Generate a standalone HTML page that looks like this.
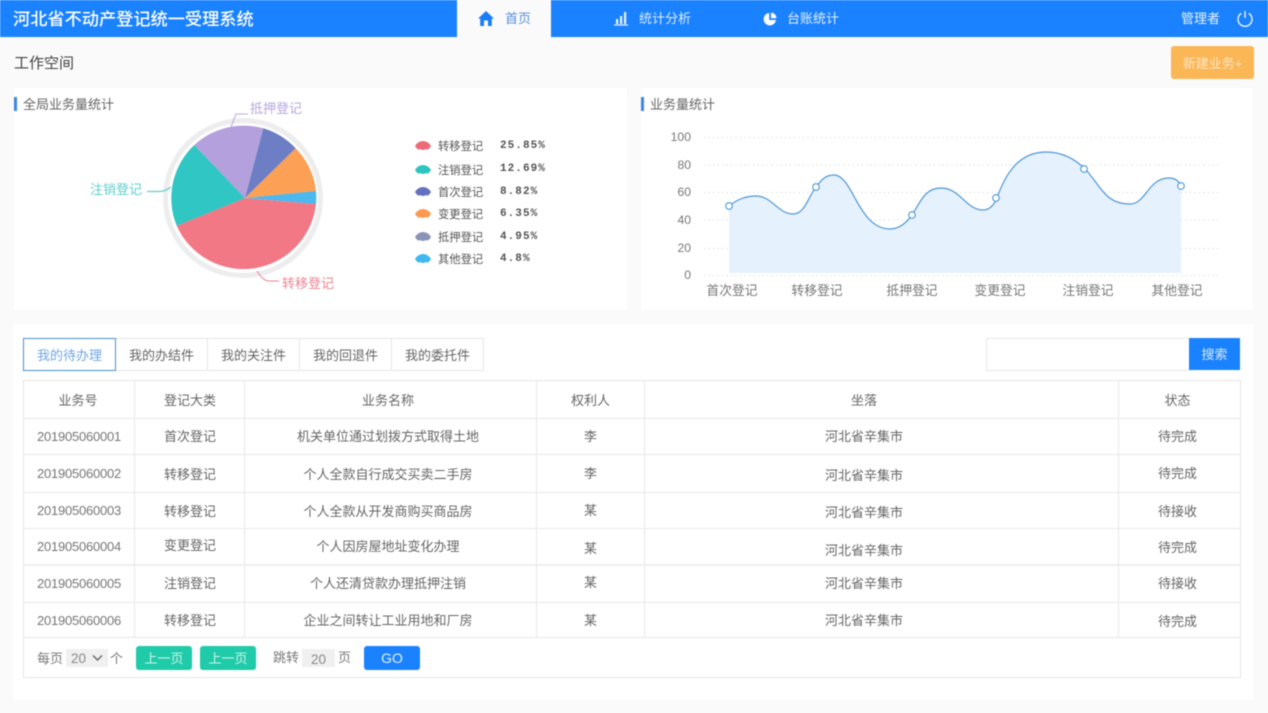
<!DOCTYPE html>
<html lang="zh"><head><meta charset="utf-8"><title>河北省不动产登记统一受理系统</title>
<style>
*{box-sizing:border-box}
html,body{margin:0;padding:0;width:1268px;height:713px;overflow:hidden;background:#fafafa}
body{position:relative;font-family:"Liberation Sans","Noto Sans CJK SC",sans-serif;font-size:13px;color:#666}
#w{position:absolute;left:0;top:0;width:1268px;height:713px;filter:blur(.4px)}
#w div,#w svg{position:absolute}
.t{line-height:20px;height:20px;white-space:nowrap;margin-top:1px}
.c{text-align:center}
.l{background:#e8e8e8}
.c1{left:23px;width:110px}.c2{left:135px;width:110px}.c3{left:245px;width:286px}.c4{left:537px;width:107px}.c5{left:645px;width:438px}.c6{left:1119px;width:117px}
.n{letter-spacing:-.23px;color:#777;left:24px}
.tab{top:338px;height:33px;line-height:34px;text-align:center;border:1px solid #e6e6e6;border-left:0;color:#666}
.lg{left:438px;font-size:11.3px;color:#555}
.pc{left:500px;font-family:"Liberation Mono",monospace;font-size:11px;font-weight:bold;letter-spacing:1.05px;color:#555}
.ax{font-size:12.8px;color:#777;text-align:center;width:70px}
.yx{left:655px;width:36px;text-align:right;font-size:12.2px;color:#777;margin-top:0}
.btn{top:646px;height:24px;line-height:25px;border-radius:3px;color:#fff;text-align:center;width:56px}
</style></head><body><div id="w">

<div style="left:0;top:0;width:1268px;height:37px;background:#1a82ff"></div>
<div style="left:0;top:37px;width:1268px;height:1px;background:#e3f6ff"></div>
<div class="t" style="left:13px;top:8px;font-size:17.2px;font-weight:500;color:#fff">河北省不动产登记统一受理系统</div>
<div style="left:457px;top:0;width:94px;height:38px;background:#fafafa"></div>
<svg style="left:477px;top:10px" width="18" height="17" viewBox="0 0 18 17"><path d="M9 1 L17 8.600 L14.800 8.600 L14.800 16 L11 16 L11 10.500 L7 10.500 L7 16 L3.200 16 L3.200 8.600 L1 8.600 Z" fill="#1a7df5"/></svg>
<div class="t" style="left:505px;top:8px;color:#5a8fd8">首页</div>
<svg style="left:613px;top:11px" width="16" height="15" viewBox="0 0 16 15"><path d="M1 14H15" stroke="#e8f2ff" stroke-width="1.2"/><rect x="3" y="8" width="2.200" height="5" fill="#e8f2ff"/><rect x="7" y="5" width="2.200" height="8" fill="#e8f2ff"/><rect x="11" y="1" width="2.200" height="12" fill="#e8f2ff"/></svg>
<div class="t" style="left:639px;top:8px;color:#dcebff">统计分析</div>
<svg style="left:763px;top:12px" width="14" height="14" viewBox="0 0 14 14"><path d="M6.200 1 A6.200 6.200 0 1 0 13 8 L6.200 8 Z" fill="#fff"/><path d="M8 .6 A5.600 5.600 0 0 1 13.400 6.200 L8 6.200 Z" fill="#fff"/></svg>
<div class="t" style="left:787px;top:8px;color:#e4efff">台账统计</div>
<div class="t" style="left:1181px;top:8px;color:#e8f2ff">管理者</div>
<svg style="left:1236px;top:10px" width="18" height="18" viewBox="0 0 18 18"><path d="M5.200 3.400 A7 7 0 1 0 12.800 3.400" fill="none" stroke="#e8f2ff" stroke-width="1.4"/><path d="M9 1V8" stroke="#e8f2ff" stroke-width="1.4"/></svg>

<div class="t" style="left:14px;top:53px;font-size:15px;color:#444">工作空间</div>
<div class="t c" style="left:1171px;top:46px;width:83px;height:33px;line-height:35px;margin-top:0;background:#fbb655;border-radius:3px;color:#fde6c4">新建业务+</div>

<div style="left:14px;top:88px;width:613px;height:222px;background:#fff"></div>
<div style="left:641px;top:88px;width:612px;height:222px;background:#fff"></div>
<div style="left:14px;top:97px;width:3px;height:14px;background:#3b86e6"></div>
<div class="t" style="left:23px;top:95px;margin-top:0;color:#666">全局业务量统计</div>
<div style="left:641px;top:97px;width:3px;height:14px;background:#3b86e6"></div>
<div class="t" style="left:650px;top:95px;margin-top:0;color:#666">业务量统计</div>

<svg style="left:0;top:0" width="640" height="310" viewBox="0 0 640 310">
<circle cx="243" cy="198" r="77.500" fill="#fff" stroke="#ededed" stroke-width="5"/>
<path d="M245 198 L316 204 A73 73 0 0 1 176.700 225.700 Z" fill="#f27885"/>
<path d="M245 198 L176.700 225.700 A73 73 0 0 1 194.300 145 Z" fill="#2fc6c3"/>
<path d="M245 198 L194.300 145 A73 73 0 0 1 263.300 128.300 Z" fill="#b4a0dc"/>
<path d="M245 198 L263.300 128.300 A73 73 0 0 1 295.700 148.300 Z" fill="#6d7ec4"/>
<path d="M245 198 L295.700 148.300 A73 73 0 0 1 316 191 Z" fill="#fba055"/>
<path d="M245 198 L316 191 A73 73 0 0 1 316 204 Z" fill="#4cb8ee"/>
<path d="M231 127 L236 114 H248" fill="none" stroke="#b9a6dc" stroke-width="1"/>
<path d="M171 187 Q165 191.500 159 191.500 H147" fill="none" stroke="#5fcfcf" stroke-width="1.300"/>
<path d="M257 271 Q263 281 269 281 H279" fill="none" stroke="#ee8492" stroke-width="1"/>
<g>
<path d="M415 146 Q418 141 423 141 Q428 141 431 146 Q428 151 426 149 Q423 151 420 149 Q418 151 415 146Z" fill="#ee6a78"/>
<path d="M415 170 Q418 165 423 165 Q428 165 431 170 Q428 175 426 173 Q423 175 420 173 Q418 175 415 170Z" fill="#2cc4bf"/>
<path d="M415 192 Q418 187 423 187 Q428 187 431 192 Q428 197 426 195 Q423 197 420 195 Q418 197 415 192Z" fill="#6470c0"/>
<path d="M415 214 Q418 209 423 209 Q428 209 431 214 Q428 219 426 217 Q423 219 420 217 Q418 219 415 214Z" fill="#fb9a50"/>
<path d="M415 237 Q418 232 423 232 Q428 232 431 237 Q428 242 426 240 Q423 242 420 240 Q418 242 415 237Z" fill="#8a93b8"/>
<path d="M415 259 Q418 254 423 254 Q428 254 431 259 Q428 264 426 262 Q423 264 420 262 Q418 264 415 259Z" fill="#3fb8f0"/>
</g>
</svg>
<div class="t" style="left:250px;top:98px;color:#b9a6dc">抵押登记</div>
<div class="t" style="left:90px;top:179px;color:#5fcfcf">注销登记</div>
<div class="t" style="left:282px;top:273px;color:#ee8492">转移登记</div>

<div class="t lg" style="top:136px">转移登记</div><div class="t pc" style="top:135px">25.85%</div>
<div class="t lg" style="top:160px">注销登记</div><div class="t pc" style="top:158px">12.69%</div>
<div class="t lg" style="top:182px">首次登记</div><div class="t pc" style="top:181px">8.82%</div>
<div class="t lg" style="top:204px">变更登记</div><div class="t pc" style="top:203px">6.35%</div>
<div class="t lg" style="top:227px">抵押登记</div><div class="t pc" style="top:226px">4.95%</div>
<div class="t lg" style="top:249px">其他登记</div><div class="t pc" style="top:248px">4.8%</div>

<svg style="left:640px;top:120px" width="600" height="170" viewBox="640 120 600 170">
<g stroke="#cfcfcf" stroke-width="1" stroke-dasharray="1 3.500">
<path d="M704 137.500H1220M704 165H1220M704 192.500H1220M704 220H1220M704 248.500H1220M704 275.500H1220"/>
</g>
<path d="M729 206 C738 199 746 196 756 196 C772 196 778 214 793 214 C805 214 808 197 816 187 C822 179 826 175 834 175 C853 175 858 229 890 229 C900 229 907 222 912 215 C921 201 925 188 941 188 C960 188 966 210 983 210 C990 210 994 205 997 198 C1006 172 1020 152 1046 152 C1064 152 1076 160 1085 169 C1100 184 1104 204 1130 204 C1146 204 1148 178 1169 178 C1175 178 1179 181 1181 186 L1181 273 L729 273 Z" fill="#e6f1fe"/>
<path d="M729 206 C738 199 746 196 756 196 C772 196 778 214 793 214 C805 214 808 197 816 187 C822 179 826 175 834 175 C853 175 858 229 890 229 C900 229 907 222 912 215 C921 201 925 188 941 188 C960 188 966 210 983 210 C990 210 994 205 997 198 C1006 172 1020 152 1046 152 C1064 152 1076 160 1085 169 C1100 184 1104 204 1130 204 C1146 204 1148 178 1169 178 C1175 178 1179 181 1181 186" fill="none" stroke="#4d97d8" stroke-width="1.200"/>
<g fill="#fff" stroke="#4d97d8" stroke-width="1.100">
<circle cx="729" cy="206" r="3.300"/><circle cx="816" cy="187" r="3.300"/><circle cx="912" cy="215" r="3.300"/><circle cx="996" cy="198" r="3.300"/><circle cx="1084" cy="169" r="3.300"/><circle cx="1181" cy="186" r="3.300"/>
</g>
</svg>
<div class="t yx" style="top:127px">100</div>
<div class="t yx" style="top:155px">80</div>
<div class="t yx" style="top:182px">60</div>
<div class="t yx" style="top:210px">40</div>
<div class="t yx" style="top:238px">20</div>
<div class="t yx" style="top:265px">0</div>
<div class="t ax" style="left:697px;top:280px">首次登记</div>
<div class="t ax" style="left:782px;top:280px">转移登记</div>
<div class="t ax" style="left:877px;top:280px">抵押登记</div>
<div class="t ax" style="left:965px;top:280px">变更登记</div>
<div class="t ax" style="left:1053px;top:280px">注销登记</div>
<div class="t ax" style="left:1142px;top:280px">其他登记</div>

<div style="left:13px;top:324px;width:1241px;height:376px;background:#fff"></div>

<div class="tab" style="left:116px;width:92px">我的办结件</div>
<div class="tab" style="left:208px;width:92px">我的关注件</div>
<div class="tab" style="left:300px;width:92px">我的回退件</div>
<div class="tab" style="left:392px;width:92px">我的委托件</div>
<div class="tab" style="left:23px;width:93px;border:1px solid #4a90cf;color:#6ea6e6">我的待办理</div>
<div style="left:986px;top:338px;width:204px;height:33px;border:1px solid #e8e8e8;background:#fff"></div>
<div class="t c" style="left:1189px;top:338px;margin-top:0;width:51px;height:32px;line-height:34px;background:#1a82ff;color:#d6e8ff">搜索</div>

<div style="left:23px;top:380px;width:1218px;height:298px;border:1px solid #e6e6e6"></div>
<div class="l" style="left:24px;top:418px;width:1216px;height:1px"></div>
<div class="l" style="left:24px;top:454px;width:1216px;height:1px"></div>
<div class="l" style="left:24px;top:492px;width:1216px;height:1px"></div>
<div class="l" style="left:24px;top:528px;width:1216px;height:1px"></div>
<div class="l" style="left:24px;top:564px;width:1216px;height:2px;background:#efefef"></div>
<div class="l" style="left:24px;top:602px;width:1216px;height:1px"></div>
<div class="l" style="left:24px;top:637px;width:1216px;height:1px"></div>
<div class="l" style="left:134px;top:381px;width:1px;height:256px"></div>
<div class="l" style="left:244px;top:381px;width:1px;height:256px"></div>
<div class="l" style="left:536px;top:381px;width:1px;height:256px"></div>
<div class="l" style="left:644px;top:381px;width:1px;height:256px"></div>
<div class="l" style="left:1118px;top:381px;width:1px;height:256px"></div>

<div class="t c c1" style="top:390px">业务号</div><div class="t c c2" style="top:390px">登记大类</div><div class="t c c3" style="top:390px">业务名称</div><div class="t c c4" style="top:390px">权利人</div><div class="t c c5" style="top:390px">坐落</div><div class="t c c6" style="top:390px">状态</div>

<div class="t c c1 n" style="top:426px">201905060001</div><div class="t c c2" style="top:426px">首次登记</div><div class="t c c3" style="top:426px">机关单位通过划拨方式取得土地</div><div class="t c c4" style="top:426px">李</div><div class="t c c5" style="top:426px">河北省辛集市</div><div class="t c c6" style="top:426px">待完成</div>

<div class="t c c1 n" style="top:463px">201905060002</div><div class="t c c2" style="top:464px">转移登记</div><div class="t c c3" style="top:464px">个人全款自行成交买卖二手房</div><div class="t c c4" style="top:463px">李</div><div class="t c c5" style="top:465px">河北省辛集市</div><div class="t c c6" style="top:463px">待完成</div>

<div class="t c c1 n" style="top:500px">201905060003</div><div class="t c c2" style="top:501px">转移登记</div><div class="t c c3" style="top:501px">个人全款从开发商购买商品房</div><div class="t c c4" style="top:500px">某</div><div class="t c c5" style="top:502px">河北省辛集市</div><div class="t c c6" style="top:501px">待接收</div>

<div class="t c c1 n" style="top:536px">201905060004</div><div class="t c c2" style="top:535px">变更登记</div><div class="t c c3" style="top:536px">个人因房屋地址变化办理</div><div class="t c c4" style="top:538px">某</div><div class="t c c5" style="top:540px">河北省辛集市</div><div class="t c c6" style="top:537px">待完成</div>

<div class="t c c1 n" style="top:573px">201905060005</div><div class="t c c2" style="top:573px">注销登记</div><div class="t c c3" style="top:573px">个人还清贷款办理抵押注销</div><div class="t c c4" style="top:572px">某</div><div class="t c c5" style="top:573px">河北省辛集市</div><div class="t c c6" style="top:573px">待接收</div>

<div class="t c c1 n" style="top:610px">201905060006</div><div class="t c c2" style="top:610px">转移登记</div><div class="t c c3" style="top:610px">企业之间转让工业用地和厂房</div><div class="t c c4" style="top:610px">某</div><div class="t c c5" style="top:610px">河北省辛集市</div><div class="t c c6" style="top:611px">待完成</div>

<div class="t" style="left:37px;top:648px;color:#777">每页</div>
<div style="left:66px;top:649px;width:42px;height:18px;background:#f0f0f0"></div>
<div class="t" style="left:71px;top:648px;color:#888;font-size:13.500px">20</div>
<svg style="left:92px;top:654px" width="11" height="8" viewBox="0 0 11 8"><path d="M1 1.500 L5.500 6 L10 1.500" fill="none" stroke="#666" stroke-width="1.400"/></svg>
<div class="t" style="left:110px;top:648px;color:#777">个</div>
<div class="btn c" style="left:136px;background:#20cbaa;color:#cdf3ea">上一页</div>
<div class="btn c" style="left:200px;background:#20cbaa;color:#cdf3ea">上一页</div>
<div class="t" style="left:273px;top:647px;color:#777">跳转</div>
<div style="left:302px;top:649px;width:33px;height:18px;background:#f0f0f0"></div>
<div class="t c" style="left:302px;top:649px;width:33px;color:#888;font-size:13.500px">20</div>
<div class="t" style="left:338px;top:647px;color:#777">页</div>
<div class="btn c" style="left:364px;background:#1a82ff;color:#e4f0ff;font-size:14px">GO</div>
</div></body></html>
